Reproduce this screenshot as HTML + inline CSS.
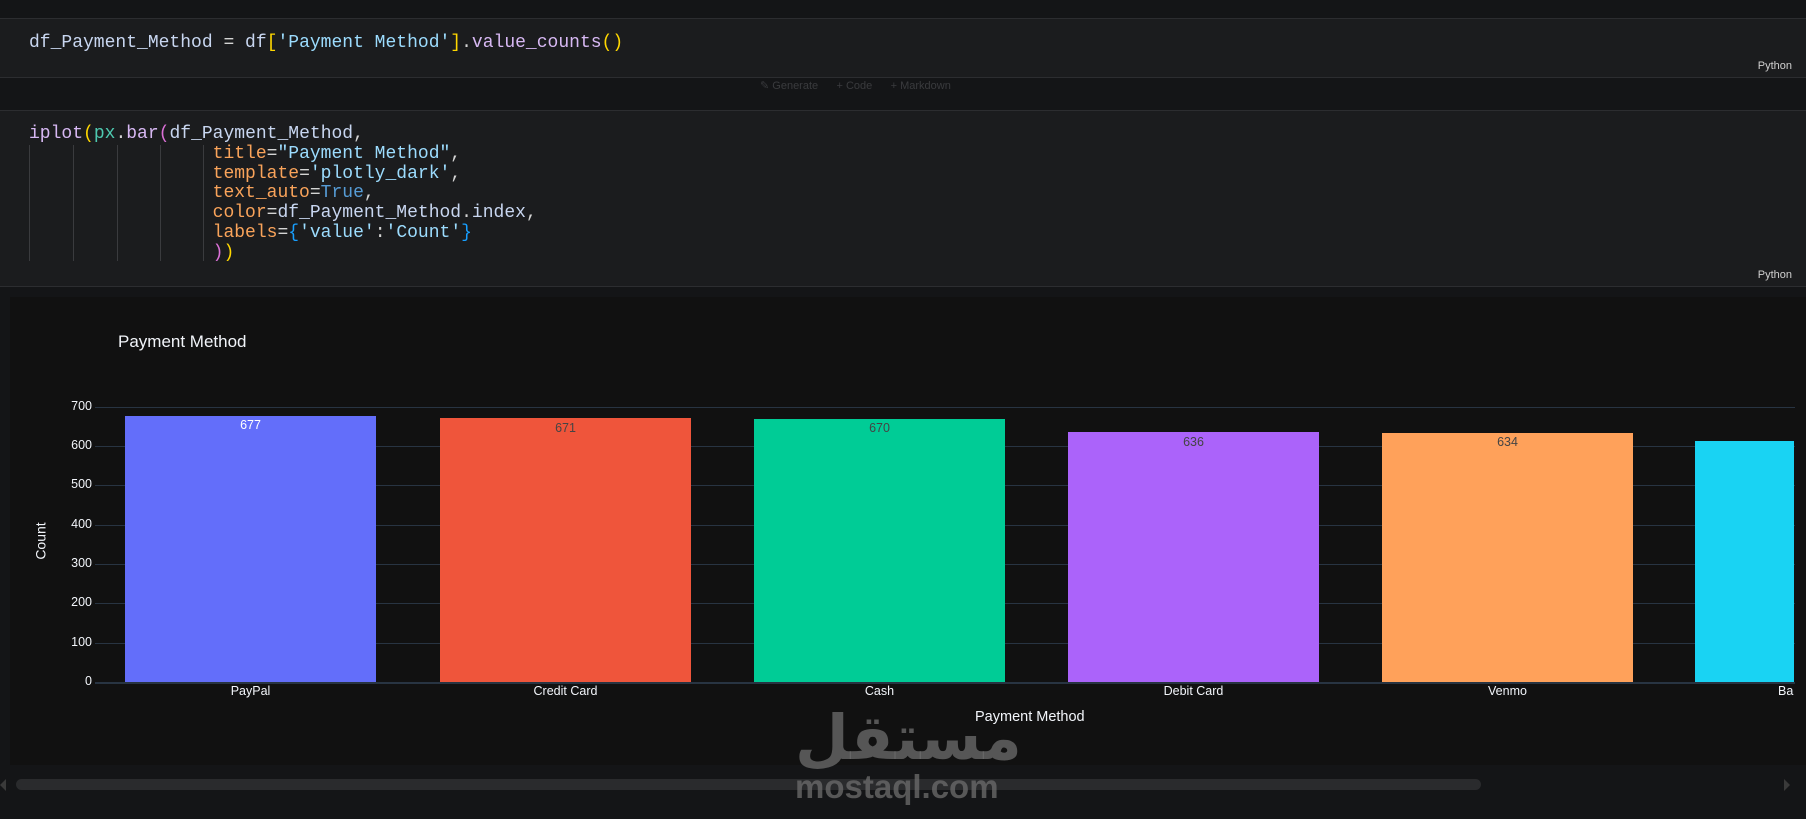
<!DOCTYPE html>
<html><head><meta charset="utf-8"><style>
*{margin:0;padding:0;box-sizing:border-box}
body{width:1806px;height:819px;background:#141517;position:relative;overflow:hidden;font-family:"Liberation Sans",sans-serif}
.cell{position:absolute;left:0;width:1806px;background:#1b1c1e;border-top:1px solid #2c2d30;border-bottom:1px solid #2c2d30}
pre{position:absolute;left:29px;font-family:"Liberation Mono",monospace;font-size:18px;line-height:19.8px;color:#d4d4d4}
.py{position:absolute;right:14px;font-size:11px;color:#cfcfcf}
.v{color:#c8d6f0}.f{color:#d7b8f3}.t{color:#4ec9b0}.s{color:#9cdcfe}.k{color:#f9a35a}.b{color:#569cd6}
.y{color:#ffd700}.p{color:#da70d6}.c{color:#179fff}
.g{position:absolute;width:1px;background:#3a3b3e;top:145px;height:116px}
.ab{position:absolute;font-size:12.5px;color:#f2f5fa}
.grid{position:absolute;left:95px;width:1700px;height:1px;background:#283442}
.bar{position:absolute;width:251px}
.bl{position:absolute;width:251px;text-align:center;font-size:12.5px;color:#444}
.xl{position:absolute;width:251px;text-align:center;font-size:12.5px;color:#f2f5fa;top:684px}
</style></head><body>
<div class="cell" style="top:18px;height:60px">
<pre style="top:15px"><span class="v">df_Payment_Method</span> = <span class="v">df</span><span class="y">[</span><span class="s">'Payment Method'</span><span class="y">]</span>.<span class="f">value_counts</span><span class="y">()</span></pre>
<div class="py" style="top:41px">Python</div></div>
<div style="position:absolute;top:79px;left:760px;font-size:11px;color:#3a3b3e">✎ Generate &nbsp;&nbsp;&nbsp;&nbsp; + Code &nbsp;&nbsp;&nbsp;&nbsp; + Markdown</div>
<div class="cell" style="top:110px;height:177px">
<div class="py" style="top:158px">Python</div></div>
<div class="g" style="left:29px"></div><div class="g" style="left:73px"></div><div class="g" style="left:117px"></div><div class="g" style="left:160px"></div><div class="g" style="left:203px"></div>
<pre style="top:125px"><span class="f">iplot</span><span class="y">(</span><span class="t">px</span>.<span class="f">bar</span><span class="p">(</span><span class="v">df_Payment_Method</span>,
                 <span class="k">title</span>=<span class="s">"Payment Method"</span>,
                 <span class="k">template</span>=<span class="s">'plotly_dark'</span>,
                 <span class="k">text_auto</span>=<span class="b">True</span>,
                 <span class="k">color</span>=<span class="v">df_Payment_Method</span>.<span class="v">index</span>,
                 <span class="k">labels</span>=<span class="c">{</span><span class="s">'value'</span>:<span class="s">'Count'</span><span class="c">}</span>
                 <span class="p">)</span><span class="y">)</span></pre>
<div style="position:absolute;left:10px;top:297px;width:1796px;height:468px;background:#111111"></div>
<div style="position:absolute;left:118px;top:332px;font-size:17px;color:#f2f5fa">Payment Method</div>
<div class="grid" style="top:407px"></div><div class="grid" style="top:446px"></div><div class="grid" style="top:485px"></div><div class="grid" style="top:525px"></div><div class="grid" style="top:564px"></div><div class="grid" style="top:603px"></div><div class="grid" style="top:643px"></div><div class="grid" style="top:682px;height:2px"></div>
<div class="ab" style="left:60px;top:399px;width:32px;text-align:right">700</div>
<div class="ab" style="left:60px;top:438px;width:32px;text-align:right">600</div>
<div class="ab" style="left:60px;top:477px;width:32px;text-align:right">500</div>
<div class="ab" style="left:60px;top:517px;width:32px;text-align:right">400</div>
<div class="ab" style="left:60px;top:556px;width:32px;text-align:right">300</div>
<div class="ab" style="left:60px;top:595px;width:32px;text-align:right">200</div>
<div class="ab" style="left:60px;top:635px;width:32px;text-align:right">100</div>
<div class="ab" style="left:60px;top:674px;width:32px;text-align:right">0</div>
<div class="ab" style="left:22px;top:533px;font-size:14px;transform:rotate(-90deg)">Count</div>
<div class="bar" style="left:125px;top:416px;height:266px;background:#636efa"></div>
<div class="bar" style="left:440px;top:418px;height:264px;background:#ef553b"></div>
<div class="bar" style="left:754px;top:419px;height:263px;background:#00cc96"></div>
<div class="bar" style="left:1068px;top:432px;height:250px;background:#ab63fa"></div>
<div class="bar" style="left:1382px;top:433px;height:249px;background:#ffa15a"></div>
<div class="bar" style="left:1695px;top:441px;height:241px;width:99px;background:#19d3f3"></div>
<div class="bl" style="left:125px;top:418px;color:#fff">677</div>
<div class="bl" style="left:440px;top:421px">671</div>
<div class="bl" style="left:754px;top:421px">670</div>
<div class="bl" style="left:1068px;top:435px">636</div>
<div class="bl" style="left:1382px;top:435px">634</div>
<div class="xl" style="left:125px">PayPal</div>
<div class="xl" style="left:440px">Credit Card</div>
<div class="xl" style="left:754px">Cash</div>
<div class="xl" style="left:1068px">Debit Card</div>
<div class="xl" style="left:1382px">Venmo</div>
<div class="xl" style="left:1695px;width:99px;text-align:left;padding-left:83px;overflow:hidden">Bank</div>
<div style="position:absolute;left:975px;top:709px;font-size:14.5px;color:#f2f5fa">Payment Method</div>
<div style="position:absolute;left:16px;top:779px;width:1465px;height:11px;border-radius:6px;background:#2a2b2d"></div>
<div style="position:absolute;left:0;top:779px;width:0;height:0;border:6px solid transparent;border-right-color:#3a3a3a;border-left:0"></div>
<div style="position:absolute;left:1784px;top:779px;width:0;height:0;border:6px solid transparent;border-left-color:#3a3a3a;border-right:0"></div>
<div style="position:absolute;left:795px;top:694px;width:215px;text-align:center;font-family:'Noto Sans CJK SC','DejaVu Sans',sans-serif;font-size:62px;font-weight:bold;line-height:76px;color:rgba(110,110,110,.75)">مستقل</div>
<div style="position:absolute;left:795px;top:768px;font-size:33px;font-weight:bold;color:rgba(110,110,110,.75);line-height:38px">mostaql.com</div>
</body></html>
